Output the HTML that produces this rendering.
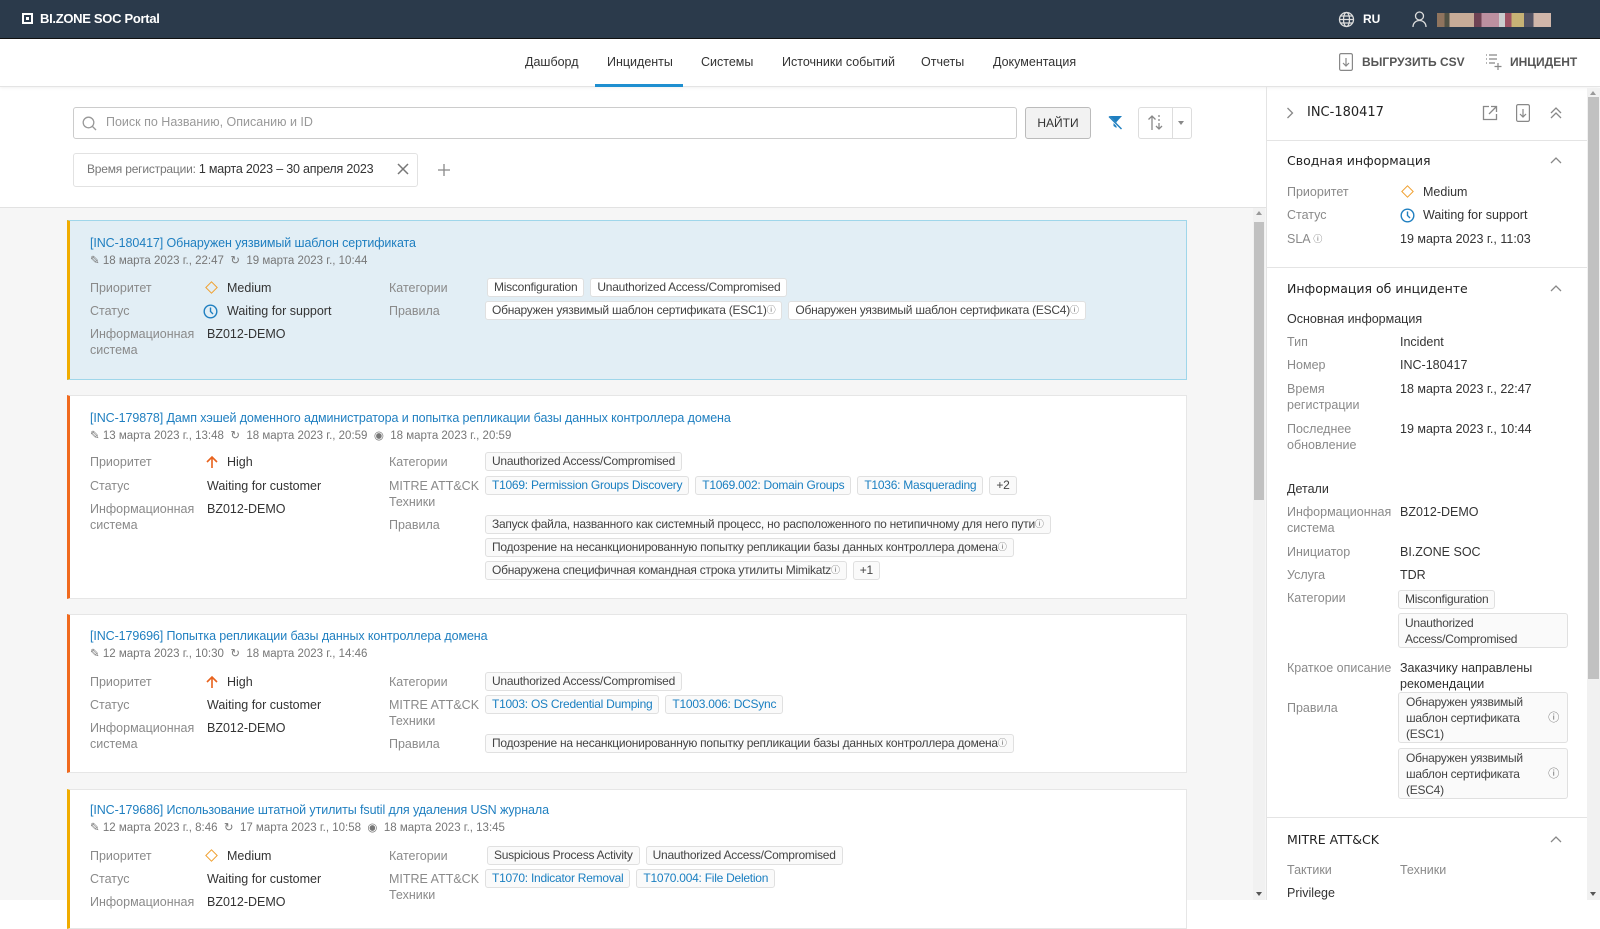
<!DOCTYPE html>
<html><head><meta charset="utf-8"><style>
*{box-sizing:border-box;margin:0;padding:0}
body{width:1600px;height:900px;overflow:hidden;font-family:"Liberation Sans",sans-serif;font-size:12.5px;color:#333;background:#fff;position:relative}
.a{position:absolute;white-space:nowrap}
.hdr{position:absolute;left:0;top:0;width:1600px;height:39px;background:#2b3a4b;border-bottom:1px solid #111}
.nav{position:absolute;left:0;top:39px;width:1600px;height:48px;background:#fff;border-bottom:1px solid #e4e4e4;box-shadow:0 1px 3px rgba(0,0,0,.06)}
.nav .a{top:16px;font-size:12.5px;color:#333}
.lbl{color:#8a8a8a}
.row{position:absolute;display:flex;gap:6px;white-space:nowrap}
.tag{height:19px;line-height:17px;border:1px solid #e0e0e0;border-radius:3px;background:#fafafa;padding:0 6px;white-space:nowrap;font-size:12px;letter-spacing:-.25px;color:#444}
.rp .tag{position:absolute}
.tag.b{color:#1a7fc1}
.card{position:absolute;left:67px;width:1120px;background:#fff;border:1px solid #e6e6e6;border-left:3px solid #f06a1e}
.card .a{line-height:16px}
.title{color:#1f7fc0;font-size:12.5px;left:20px;letter-spacing:-.1px}
.meta{color:#777;font-size:11.5px;left:20px}
.q{font-size:9px;vertical-align:top;color:#666}
.rp .a{line-height:16px}
.h{font-family:"DejaVu Sans",sans-serif;font-size:12.5px;color:#222}
.hi{position:absolute;left:135px}
</style></head><body>
<div class="hdr">
<div class="a" style="left:22px;top:13px;width:11px;height:11px;border:2px solid #fff"><div style="position:absolute;left:2px;top:2px;width:3px;height:3px;background:#fff"></div></div>
<div class="a" style="left:40px;top:11px;color:#fff;font-weight:bold;font-size:13px;letter-spacing:-.3px">BI.ZONE SOC Portal</div>
<svg class="a" style="left:1338px;top:11px" width="17" height="17" viewBox="0 0 17 17" fill="none" stroke="#ddd" stroke-width="1.3"><circle cx="8.5" cy="8.5" r="7"/><ellipse cx="8.5" cy="8.5" rx="3" ry="7"/><path d="M1.5 8.5h14M2.5 5h12M2.5 12h12"/></svg>
<div class="a" style="left:1363px;top:12px;color:#fff;font-size:12px;font-weight:bold">RU</div>
<svg class="a" style="left:1412px;top:11px" width="15" height="17" viewBox="0 0 15 17" fill="none" stroke="#ddd" stroke-width="1.3"><circle cx="7.5" cy="5" r="4"/><path d="M1 16c0-4 3-6.5 6.5-6.5S14 12 14 16"/></svg>
<div class="a" style="left:1437px;top:13px;width:124px;height:14px;background:linear-gradient(90deg,#9a7a60 0 6%,#554 6% 10%,#d9b9a0 10% 30%,#745 30% 36%,#c9a 36% 50%,#ddd 50% 55%,#a56 55% 60%,#d8c07a 60% 70%,#556 70% 78%,#e2c4b4 78% 92%,#2b3a4b 92%);opacity:.9"></div>
</div>
<div class="nav">
<div class="a" style="left:525px">Дашборд</div>
<div class="a" style="left:607px">Инциденты</div>
<div class="a" style="left:595px;top:45px;width:88px;height:3px;background:#1f8fd0"></div>
<div class="a" style="left:701px">Системы</div>
<div class="a" style="left:782px">Источники событий</div>
<div class="a" style="left:921px">Отчеты</div>
<div class="a" style="left:993px">Документация</div>
<svg class="a" style="left:1339px;top:14px" width="14" height="18" viewBox="0 0 14 18" fill="none" stroke="#888" stroke-width="1.2"><rect x=".6" y=".6" width="12.8" height="16.8" rx="1.5"/><path d="M7 5v8M4 10l3 3 3-3"/></svg>
<div class="a" style="left:1362px;font-weight:bold;color:#555;font-size:12px">ВЫГРУЗИТЬ CSV</div>
<svg class="a" style="left:1485px;top:14px" width="18" height="18" viewBox="0 0 18 18" fill="none" stroke="#888" stroke-width="1.2"><path d="M1 2h1M4 2h8M1 6h1M4 6h8M1 10h1M4 10h6M13 10v7M9.5 13.5h7"/></svg>
<div class="a" style="left:1510px;font-weight:bold;color:#555;font-size:12px">ИНЦИДЕНТ</div>
</div>
<div class="a" style="left:73px;top:107px;width:944px;height:32px;border:1px solid #ccc;border-radius:3px"></div>
<svg class="a" style="left:82px;top:116px" width="15" height="15" viewBox="0 0 15 15" fill="none" stroke="#999" stroke-width="1.3"><circle cx="6.5" cy="6.5" r="5.3"/><path d="M10.5 10.5l3.5 3.5"/></svg>
<div class="a" style="left:106px;top:115px;color:#999">Поиск по Названию, Описанию и ID</div>
<div class="a" style="left:1025px;top:107px;width:66px;height:32px;border:1px solid #bbb;border-radius:3px;background:#f2f2f2;text-align:center;line-height:30px;font-size:12px;color:#333">НАЙТИ</div>
<svg class="a" style="left:1107px;top:115px" width="16" height="15" viewBox="0 0 16 15"><path d="M1 1h14l-5.5 6v6l-3-2V7z" fill="#1f7fc0"/><path d="M1 1l13 13" stroke="#fff" stroke-width="2.2"/><path d="M2 1.5l12.5 12.5" stroke="#1f7fc0" stroke-width="1.4"/></svg>
<div class="a" style="left:1138px;top:107px;width:54px;height:32px;border:1px solid #ddd;border-radius:3px"></div>
<div class="a" style="left:1172px;top:107px;width:1px;height:32px;background:#ddd"></div>
<svg class="a" style="left:1147px;top:114px" width="18" height="17" viewBox="0 0 18 17" fill="none" stroke="#888" stroke-width="1.3"><path d="M5 16V2M1.5 5.5L5 2l3.5 3.5M12 1v2M12 5v2M12 9v6M9 12l3 3 3-3"/></svg>
<div class="a" style="left:1178px;top:121px;border:3.5px solid transparent;border-top:4px solid #888"></div>
<div class="a" style="left:73px;top:153px;width:345px;height:34px;border:1px solid #e2e2e2;border-radius:3px"></div>
<div class="a" style="left:87px;top:162px;color:#777;font-size:12px;letter-spacing:-.2px">Время регистрации: <span style="color:#333;font-size:12.5px">1 марта 2023 – 30 апреля 2023</span></div>
<svg class="a" style="left:397px;top:163px" width="12" height="12" viewBox="0 0 12 12" stroke="#777" stroke-width="1.5"><path d="M1 1l10 10M11 1L1 11"/></svg>
<svg class="a" style="left:438px;top:164px" width="12" height="12" viewBox="0 0 12 12" stroke="#888" stroke-width="1.3"><path d="M6 0v12M0 6h12"/></svg>
<div class="a" style="left:0;top:207px;width:1266px;height:693px;background:#f6f6f6;border-top:1px solid #e2e2e2"></div>
<div class="a" style="left:1253px;top:208px;width:12px;height:692px;background:#f1f1f1"></div>
<div class="a" style="left:1254px;top:222px;width:10px;height:278px;background:#c1c1c1"></div>
<div class="a" style="left:1256px;top:211px;border:3px solid transparent;border-bottom:4px solid #999;border-top:0"></div>
<div class="a" style="left:1256px;top:892px;border:3px solid transparent;border-top:4px solid #555;border-bottom:0"></div>

<!-- card 1 -->
<div class="card" style="top:220px;height:160px;background:#e2eef5;border-color:#9fd6ea;border-left-color:#f0ac00">
<div class="a title" style="top:14px">[INC-180417] Обнаружен уязвимый шаблон сертификата</div>
<div class="a meta" style="top:32px">✎ 18 марта 2023 г., 22:47 &nbsp;↻ &nbsp;19 марта 2023 г., 10:44</div>
<div class="a lbl" style="left:20px;top:59px">Приоритет</div>
<div class="a" style="left:137px;top:62px;width:9px;height:9px;border:1.5px solid #f0a030;transform:rotate(45deg)"></div>
<div class="a" style="left:157px;top:59px">Medium</div>
<div class="a lbl" style="left:20px;top:82px">Статус</div>
<svg class="a" style="left:133px;top:83px" width="15" height="15" viewBox="0 0 15 15" fill="none" stroke="#1f7fc0" stroke-width="1.4"><circle cx="7.5" cy="7.5" r="6.3"/><path d="M7.5 3.5v4l2.5 2.5"/></svg>
<div class="a" style="left:157px;top:82px">Waiting for support</div>
<div class="a lbl" style="left:20px;top:105px">Информационная</div>
<div class="a lbl" style="left:20px;top:121px">система</div>
<div class="a" style="left:137px;top:105px">BZ012-DEMO</div>
<div class="a lbl" style="left:319px;top:59px">Категории</div>
<div class="a lbl" style="left:319px;top:82px">Правила</div>
<div class="row" style="left:417px;top:57px"><div class="tag" style="background:#fff">Misconfiguration</div><div class="tag" style="background:#fff">Unauthorized Access/Compromised</div></div>
<div class="row" style="left:415px;top:80px"><div class="tag" style="background:#fff">Обнаружен уязвимый шаблон сертификата (ESC1)<span class="q">ⓘ</span></div><div class="tag" style="background:#fff">Обнаружен уязвимый шаблон сертификата (ESC4)<span class="q">ⓘ</span></div></div>
</div>

<!-- card 2 -->
<div class="card" style="top:395px;height:204px">
<div class="a title" style="top:14px">[INC-179878] Дамп хэшей доменного администратора и попытка репликации базы данных контроллера домена</div>
<div class="a meta" style="top:32px">✎ 13 марта 2023 г., 13:48 &nbsp;↻ &nbsp;18 марта 2023 г., 20:59 &nbsp;◉ &nbsp;18 марта 2023 г., 20:59</div>
<div class="a lbl" style="left:20px;top:58px">Приоритет</div>
<svg class="hi" style="top:59px" width="14" height="14" viewBox="0 0 14 14" fill="none" stroke="#e8621c" stroke-width="1.6"><path d="M7 13V2M2 7l5-5 5 5"/></svg>
<div class="a" style="left:157px;top:58px">High</div>
<div class="a lbl" style="left:20px;top:82px">Статус</div>
<div class="a" style="left:137px;top:82px">Waiting for customer</div>
<div class="a lbl" style="left:20px;top:105px">Информационная</div>
<div class="a lbl" style="left:20px;top:121px">система</div>
<div class="a" style="left:137px;top:105px">BZ012-DEMO</div>
<div class="a lbl" style="left:319px;top:58px">Категории</div>
<div class="a lbl" style="left:319px;top:82px">MITRE ATT&amp;CK</div>
<div class="a lbl" style="left:319px;top:98px">Техники</div>
<div class="a lbl" style="left:319px;top:121px">Правила</div>
<div class="row" style="left:415px;top:56px"><div class="tag">Unauthorized Access/Compromised</div></div>
<div class="row" style="left:415px;top:80px"><div class="tag b">T1069: Permission Groups Discovery</div><div class="tag b">T1069.002: Domain Groups</div><div class="tag b">T1036: Masquerading</div><div class="tag">+2</div></div>
<div class="row" style="left:415px;top:119px"><div class="tag">Запуск файла, названного как системный процесс, но расположенного по нетипичному для него пути<span class="q">ⓘ</span></div></div>
<div class="row" style="left:415px;top:142px"><div class="tag">Подозрение на несанкционированную попытку репликации базы данных контроллера домена<span class="q">ⓘ</span></div></div>
<div class="row" style="left:415px;top:165px"><div class="tag">Обнаружена специфичная командная строка утилиты Mimikatz<span class="q">ⓘ</span></div><div class="tag">+1</div></div>
</div>

<!-- card 3 -->
<div class="card" style="top:614px;height:159px">
<div class="a title" style="top:13px">[INC-179696] Попытка репликации базы данных контроллера домена</div>
<div class="a meta" style="top:31px">✎ 12 марта 2023 г., 10:30 &nbsp;↻ &nbsp;18 марта 2023 г., 14:46</div>
<div class="a lbl" style="left:20px;top:59px">Приоритет</div>
<svg class="hi" style="top:60px" width="14" height="14" viewBox="0 0 14 14" fill="none" stroke="#e8621c" stroke-width="1.6"><path d="M7 13V2M2 7l5-5 5 5"/></svg>
<div class="a" style="left:157px;top:59px">High</div>
<div class="a lbl" style="left:20px;top:82px">Статус</div>
<div class="a" style="left:137px;top:82px">Waiting for customer</div>
<div class="a lbl" style="left:20px;top:105px">Информационная</div>
<div class="a lbl" style="left:20px;top:121px">система</div>
<div class="a" style="left:137px;top:105px">BZ012-DEMO</div>
<div class="a lbl" style="left:319px;top:59px">Категории</div>
<div class="a lbl" style="left:319px;top:82px">MITRE ATT&amp;CK</div>
<div class="a lbl" style="left:319px;top:98px">Техники</div>
<div class="a lbl" style="left:319px;top:121px">Правила</div>
<div class="row" style="left:415px;top:57px"><div class="tag">Unauthorized Access/Compromised</div></div>
<div class="row" style="left:415px;top:80px"><div class="tag b">T1003: OS Credential Dumping</div><div class="tag b">T1003.006: DCSync</div></div>
<div class="row" style="left:415px;top:119px"><div class="tag">Подозрение на несанкционированную попытку репликации базы данных контроллера домена<span class="q">ⓘ</span></div></div>
</div>

<!-- card 4 -->
<div class="card" style="top:789px;height:140px;border-left-color:#f0ac00">
<div class="a title" style="top:12px">[INC-179686] Использование штатной утилиты fsutil для удаления USN журнала</div>
<div class="a meta" style="top:30px">✎ 12 марта 2023 г., 8:46 &nbsp;↻ &nbsp;17 марта 2023 г., 10:58 &nbsp;◉ &nbsp;18 марта 2023 г., 13:45</div>
<div class="a lbl" style="left:20px;top:58px">Приоритет</div>
<div class="a" style="left:137px;top:61px;width:9px;height:9px;border:1.5px solid #f0a030;transform:rotate(45deg)"></div>
<div class="a" style="left:157px;top:58px">Medium</div>
<div class="a lbl" style="left:20px;top:81px">Статус</div>
<div class="a" style="left:137px;top:81px">Waiting for customer</div>
<div class="a lbl" style="left:20px;top:104px">Информационная</div>
<div class="a" style="left:137px;top:104px">BZ012-DEMO</div>
<div class="a lbl" style="left:319px;top:58px">Категории</div>
<div class="a lbl" style="left:319px;top:81px">MITRE ATT&amp;CK</div>
<div class="a lbl" style="left:319px;top:97px">Техники</div>
<div class="row" style="left:417px;top:56px"><div class="tag">Suspicious Process Activity</div><div class="tag">Unauthorized Access/Compromised</div></div>
<div class="row" style="left:415px;top:79px"><div class="tag b">T1070: Indicator Removal</div><div class="tag b">T1070.004: File Deletion</div></div>
</div>

<!-- right panel -->
<div class="rp">
<div class="a" style="left:1266px;top:87px;width:1px;height:813px;background:#e4e4e4"></div>
<div class="a" style="left:1587px;top:88px;width:13px;height:812px;background:#f1f1f1"></div>
<div class="a" style="left:1588px;top:97px;width:11px;height:582px;background:#c1c1c1"></div>
<div class="a" style="left:1590px;top:91px;border:3px solid transparent;border-bottom:4px solid #999;border-top:0"></div>
<div class="a" style="left:1590px;top:892px;border:3px solid transparent;border-top:4px solid #555;border-bottom:0"></div>
<svg class="a" style="left:1286px;top:107px" width="8" height="12" viewBox="0 0 8 12" fill="none" stroke="#888" stroke-width="1.3"><path d="M1.5 1l5 5-5 5"/></svg>
<div class="a h" style="left:1307px;top:105px;font-size:13px">INC-180417</div>
<svg class="a" style="left:1482px;top:105px" width="16" height="16" viewBox="0 0 16 16" fill="none" stroke="#888" stroke-width="1.3"><path d="M7 1.5H1.5v13h13V9M9 1.5h5.5V7M14.5 1.5L7 9"/></svg>
<svg class="a" style="left:1516px;top:104px" width="14" height="18" viewBox="0 0 14 18" fill="none" stroke="#888" stroke-width="1.2"><rect x=".6" y=".6" width="12.8" height="16.8" rx="1.5"/><path d="M7 5v8M4 10l3 3 3-3"/></svg>
<svg class="a" style="left:1550px;top:107px" width="12" height="12" viewBox="0 0 12 12" fill="none" stroke="#888" stroke-width="1.3"><path d="M1 6l5-5 5 5M1 11l5-5 5 5"/></svg>
<div class="a" style="left:1267px;top:140px;width:320px;height:1px;background:#e4e4e4"></div>
<div class="a h" style="left:1287px;top:153px">Сводная информация</div>
<svg class="a" style="left:1550px;top:156px" width="12" height="8" viewBox="0 0 12 8" fill="none" stroke="#888" stroke-width="1.3"><path d="M1 7l5-5 5 5"/></svg>
<div class="a lbl" style="left:1287px;top:184px">Приоритет</div>
<div class="a" style="left:1403px;top:187px;width:9px;height:9px;border:1.5px solid #f0a030;transform:rotate(45deg)"></div>
<div class="a" style="left:1423px;top:184px">Medium</div>
<div class="a lbl" style="left:1287px;top:207px">Статус</div>
<svg class="a" style="left:1400px;top:208px" width="15" height="15" viewBox="0 0 15 15" fill="none" stroke="#1f7fc0" stroke-width="1.4"><circle cx="7.5" cy="7.5" r="6.3"/><path d="M7.5 3.5v4l2.5 2.5"/></svg>
<div class="a" style="left:1423px;top:207px">Waiting for support</div>
<div class="a lbl" style="left:1287px;top:231px">SLA <span class="q">ⓘ</span></div>
<div class="a" style="left:1400px;top:231px">19 марта 2023 г., 11:03</div>
<div class="a" style="left:1267px;top:267px;width:320px;height:1px;background:#e4e4e4"></div>
<div class="a h" style="left:1287px;top:281px">Информация об инциденте</div>
<svg class="a" style="left:1550px;top:284px" width="12" height="8" viewBox="0 0 12 8" fill="none" stroke="#888" stroke-width="1.3"><path d="M1 7l5-5 5 5"/></svg>
<div class="a" style="left:1287px;top:311px;color:#333">Основная информация</div>
<div class="a lbl" style="left:1287px;top:334px">Тип</div><div class="a" style="left:1400px;top:334px">Incident</div>
<div class="a lbl" style="left:1287px;top:357px">Номер</div><div class="a" style="left:1400px;top:357px">INC-180417</div>
<div class="a lbl" style="left:1287px;top:381px">Время</div><div class="a lbl" style="left:1287px;top:397px">регистрации</div><div class="a" style="left:1400px;top:381px">18 марта 2023 г., 22:47</div>
<div class="a lbl" style="left:1287px;top:421px">Последнее</div><div class="a lbl" style="left:1287px;top:437px">обновление</div><div class="a" style="left:1400px;top:421px">19 марта 2023 г., 10:44</div>
<div class="a" style="left:1287px;top:481px;color:#333">Детали</div>
<div class="a lbl" style="left:1287px;top:504px">Информационная</div><div class="a lbl" style="left:1287px;top:520px">система</div><div class="a" style="left:1400px;top:504px">BZ012-DEMO</div>
<div class="a lbl" style="left:1287px;top:544px">Инициатор</div><div class="a" style="left:1400px;top:544px">BI.ZONE SOC</div>
<div class="a lbl" style="left:1287px;top:567px">Услуга</div><div class="a" style="left:1400px;top:567px">TDR</div>
<div class="a lbl" style="left:1287px;top:590px">Категории</div>
<div class="tag" style="left:1398px;top:590px">Misconfiguration</div>
<div class="tag" style="left:1398px;top:613px;width:170px;height:35px;white-space:normal;line-height:16px;padding-top:1px">Unauthorized Access/Compromised</div>
<div class="a lbl" style="left:1287px;top:660px">Краткое описание</div>
<div class="a" style="left:1400px;top:660px">Заказчику направлены</div><div class="a" style="left:1400px;top:676px">рекомендации</div>
<div class="a lbl" style="left:1287px;top:700px">Правила</div>
<div class="tag" style="left:1398px;top:692px;width:170px;height:51px;white-space:normal;line-height:16px;padding:1px 30px 0 7px">Обнаружен уязвимый шаблон сертификата (ESC1)<span class="a q" style="right:8px;top:17px;font-size:11px">ⓘ</span></div>
<div class="tag" style="left:1398px;top:748px;width:170px;height:51px;white-space:normal;line-height:16px;padding:1px 30px 0 7px">Обнаружен уязвимый шаблон сертификата (ESC4)<span class="a q" style="right:8px;top:17px;font-size:11px">ⓘ</span></div>
<div class="a" style="left:1267px;top:817px;width:320px;height:1px;background:#e4e4e4"></div>
<div class="a h" style="left:1287px;top:832px">MITRE ATT&amp;CK</div>
<svg class="a" style="left:1550px;top:835px" width="12" height="8" viewBox="0 0 12 8" fill="none" stroke="#888" stroke-width="1.3"><path d="M1 7l5-5 5 5"/></svg>
<div class="a lbl" style="left:1287px;top:862px">Тактики</div><div class="a lbl" style="left:1400px;top:862px">Техники</div>
<div class="a" style="left:1287px;top:885px">Privilege</div>
</div>
</body></html>
